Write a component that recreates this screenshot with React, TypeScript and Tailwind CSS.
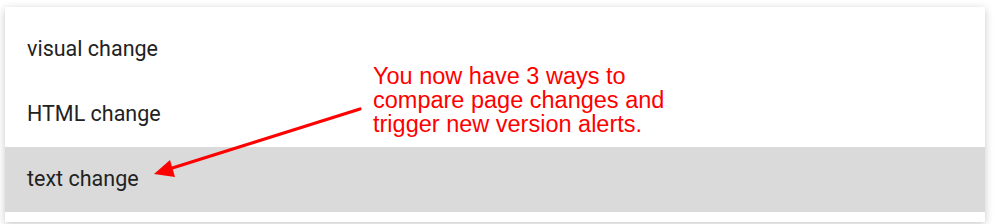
import React from "react";

export default function App() {
  const items = ["visual change", "HTML change", "text change"];
  return (
    <div className="relative w-[1000px] h-[224px] bg-white overflow-hidden pt-[7px] pl-[5px]">
      <div className="w-[980px] h-[215px] bg-white py-[10px] flex flex-col shadow-[0_2px_8px_rgba(0,0,0,0.22)]">
        {items.map((t, i) => (
          <div
            key={t}
            className={`h-[65px] flex items-center pl-[22px] text-[21.5px] text-[#222222] ${
              i === 2 ? "bg-[#dadada]" : "bg-white"
            }`}
            style={{ fontFamily: "Roboto, 'Noto Sans', sans-serif" }}
          >
            {t}
          </div>
        ))}
      </div>

      <svg
        className="absolute left-0 top-0 pointer-events-none"
        width="1000"
        height="224"
        viewBox="0 0 1000 224"
      >
        <line x1="360" y1="109" x2="166" y2="170" stroke="#ff0000" strokeWidth="3.2" strokeLinecap="round" />
        <polygon points="154,174 170,160 175,177" fill="#ff0000" />
      </svg>

      <div
        className="absolute left-[373px] top-[64px] text-[23.5px] leading-[24px] text-[#ff0000]"
        style={{ fontFamily: "'Liberation Sans', Arial, sans-serif" }}
      >
        <div>You now have 3 ways to</div>
        <div>compare page changes and</div>
        <div>trigger new version alerts.</div>
      </div>
    </div>
  );
}
